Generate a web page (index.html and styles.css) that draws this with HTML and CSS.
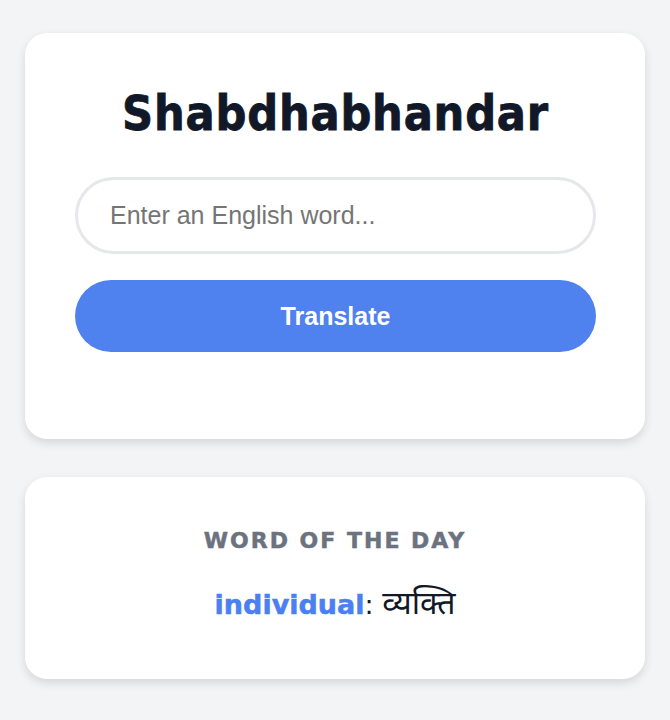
FILE: index.html
```
<!DOCTYPE html>
<html>
<head>
<meta charset="utf-8">
<link rel="stylesheet" href="styles.css">
</head>
<body>
<div class="page">
  <section class="card main">
    <h1 class="title">Shabdhabhandar</h1>
    <input class="word-input" type="text" placeholder="Enter an English word...">
    <button class="btn">Translate</button>
    <div class="result"></div>
  </section>
  <section class="card wotd">
    <h2 class="wotd-label">WORD OF THE DAY</h2>
    <p class="wotd-text"><span class="en">individual</span>: <span class="hi">व्यक्ति</span></p>
  </section>
</div>
</body>
</html>
```
FILE: styles.css
```
html, body { margin: 0; padding: 0; }
body {
  background: #f3f4f6;
  font-family: "DejaVu Sans", sans-serif;
  width: 670px;
  height: 720px;
  overflow: hidden;
}
.page {
  padding: 33px 25px 0 25px;
  display: flex;
  flex-direction: column;
  gap: 38px;
}
.card {
  background: #fff;
  border-radius: 22px;
  box-shadow: 0 4px 10px rgba(0,0,0,0.12);
  box-sizing: border-box;
}
.main {
  height: 406px;
  padding: 52px 49px 0 50px;
  display: flex;
  flex-direction: column;
}
.title {
  margin: 0 0 36px 0;
  text-align: center;
  font-family: "DejaVu Sans Condensed", "DejaVu Sans", sans-serif;
  font-stretch: condensed;
  font-weight: bold;
  font-size: 48px;
  line-height: 56px;
  letter-spacing: 0.8px;
  color: #111827;
  -webkit-text-stroke: 0.8px #111827;
}
.word-input {
  box-sizing: border-box;
  width: 100%;
  height: 77px;
  border: 3px solid #e5e7eb;
  border-radius: 40px;
  padding: 0 32px;
  font-family: "Liberation Sans", Arial, sans-serif;
  font-size: 25px;
  color: #111827;
  outline: none;
  background: #fff;
}
.word-input::placeholder { color: #757575; }
.btn {
  margin-top: 26px;
  width: 100%;
  height: 72px;
  border: none;
  border-radius: 36px;
  background: #4f82ee;
  color: #fff;
  font-family: "Liberation Sans", Arial, sans-serif;
  font-weight: bold;
  font-size: 25px;
}
.wotd {
  height: 202px;
  padding-top: 50px;
  text-align: center;
}
.wotd-label {
  margin: 0;
  font-size: 22px;
  font-weight: bold;
  letter-spacing: 2px;
  color: #6b7280;
  line-height: 28px;
  -webkit-text-stroke: 0.5px #6b7280;
}
.wotd-text {
  margin: 30px 0 0 0;
  font-size: 27px;
  line-height: 40px;
  color: #111827;
}
.wotd-text .en {
  color: #4a80f0;
  font-weight: bold;
  -webkit-text-stroke: 0.5px #4a80f0;
}
.wotd-text .hi {
  font-family: "Noto Sans Devanagari", "Noto Sans", sans-serif;
  font-size: 32px;
}
```
